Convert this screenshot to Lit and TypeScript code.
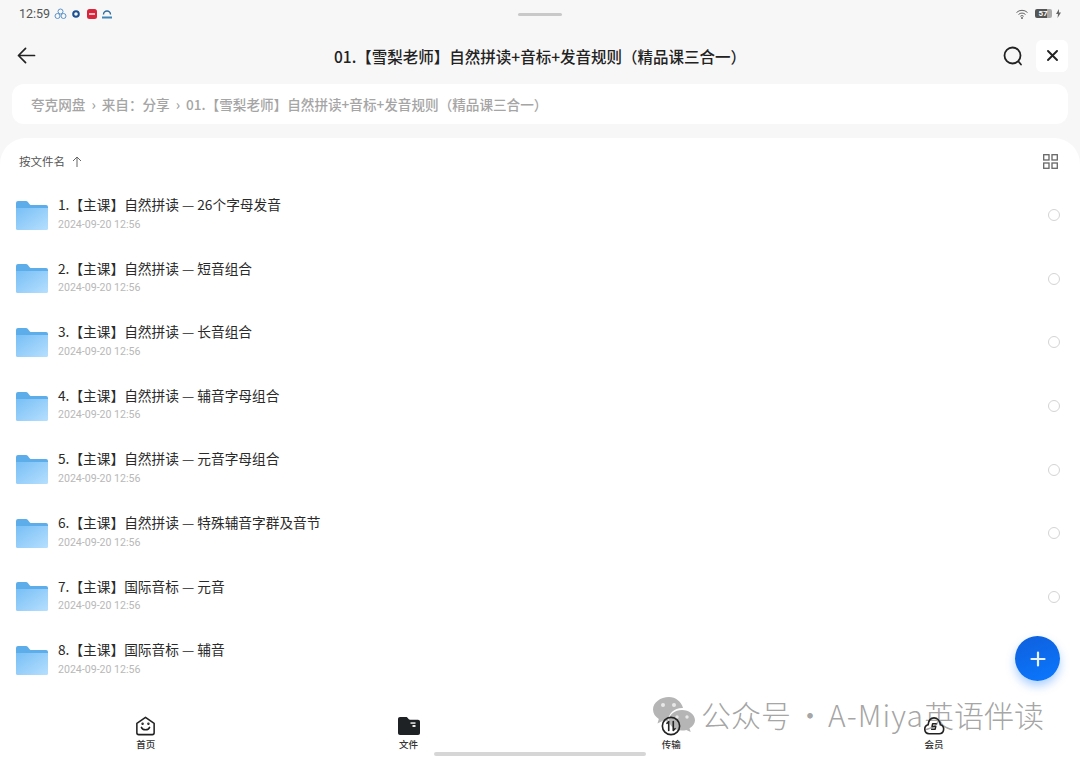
import { LitElement, html, css, svg } from "lit";
import { customElement } from "lit/decorators.js";

const rows = [
  "1.【主课】自然拼读 — 26个字母发音",
  "2.【主课】自然拼读 — 短音组合",
  "3.【主课】自然拼读 — 长音组合",
  "4.【主课】自然拼读 — 辅音字母组合",
  "5.【主课】自然拼读 — 元音字母组合",
  "6.【主课】自然拼读 — 特殊辅音字群及音节",
  "7.【主课】国际音标 — 元音",
  "8.【主课】国际音标 — 辅音",
];

const folder = svg`<svg class="folder" width="32" height="29" viewBox="0 0 32 29">
  <defs><linearGradient id="fg" x1="0" y1="0" x2="1" y2="1"><stop offset="0" stop-color="#78bff6"/><stop offset="1" stop-color="#b6dffe"/></linearGradient></defs>
  <path d="M0 2a2 2 0 0 1 2-2h8c1.500 0 2 1 3 2.500 .6 .9 1 1.500 2.500 1.500H30a2 2 0 0 1 2 2v4H0z" fill="#5cade9"/>
  <path d="M0 7h32V27.500a1.500 1.500 0 0 1-1.500 1.500H1.500A1.500 1.500 0 0 1 0 27.500z" fill="url(#fg)"/>
</svg>`;

@customElement("app-root")
export class AppRoot extends LitElement {
  static styles = css`
    :host { display: block; width: 1080px; height: 759px; position: relative; overflow: hidden; background: #f7f7f7;
      font-family: "Noto Sans CJK SC", "Noto Sans", sans-serif; color: #222; }
    .status { height: 27px; display: flex; align-items: center; padding: 0 19px; gap: 3.500px; font-size: 12.5px; color: #555; font-family: Roboto, sans-serif; }
    .status .spacer { flex: 1; }
    .status svg { display: block; }
    .batt { width: 17px; height: 9px; background: linear-gradient(90deg, #555 70%, #aaa 70%); border-radius: 2px; color: #fff; font-size: 8px; line-height: 9px; text-align: center; font-weight: 700; margin: 0 1px 0 3px; }
    .handle { position: absolute; left: 518px; top: 13px; width: 44px; height: 3px; border-radius: 2px; background: #c9c9c9; }
    .top { height: 57px; display: flex; align-items: center; padding: 0 12px 0 17px; }
    .top .title { flex: 1; text-align: center; font-size: 15.500px; font-weight: 500; color: #222; padding-left: 41px; white-space: nowrap; }
    .top .search { margin-right: 13px; display: block; }
    .close { width: 32px; height: 32px; background: #fff; border-radius: 6px; display: flex; align-items: center; justify-content: center; }
    .crumb { margin: 0 12px; height: 40px; border-radius: 12px; background: #fff; display: flex; align-items: center; padding: 0 19px; gap: 6px; font-size: 13.600px; font-weight: 500; color: #a5a5a5; white-space: nowrap; }
    .crumb .sep { font-size: 14px; color: #a0a0a0; }
    .sheet { margin-top: 14px; background: #fff; border-radius: 26px 26px 0 0; height: 621px; box-sizing: border-box; padding-top: 13px; display: flex; flex-direction: column; }
    .sort { height: 20px; display: flex; align-items: center; padding: 0 22px 0 19px; font-size: 11.5px; color: #555; gap: 7px; }
    .sort .spacer { flex: 1; }
    .list { padding-top: 12px; }
    .row { height: 63.6px; display: flex; align-items: center; padding: 0 20px 0 16px; box-sizing: border-box; gap: 10px; }
    .folder { flex: none; margin-top: 1px; }
    .text { flex: 1; padding-bottom: 4px; }
    .name { font-size: 13.700px; line-height: 19px; color: #2a2a2a; white-space: nowrap; }
    .date { font-size: 10.600px; line-height: 13px; margin-top: 3.500px; color: #b8b8b8; font-family: Roboto, sans-serif; }
    .radio { width: 10px; height: 10px; border: 1px solid #d4d4d4; border-radius: 50%; flex: none; margin-top: 1px; }
    .tabs { position: absolute; left: 0; right: 0; top: 716px; display: flex; padding: 0 14.500px; }
    .tab { flex: 1; display: flex; flex-direction: column; align-items: center; font-size: 9.500px; line-height: 12px; color: #333; font-weight: 500; gap: 2px; }
    .tab svg { display: block; }
    .indicator { position: absolute; left: 434px; top: 752px; width: 212px; height: 4px; border-radius: 2px; background: #d6d6d6; }
    .fab { position: absolute; left: 1015px; top: 636px; width: 45px; height: 45px; border-radius: 50%; background: linear-gradient(160deg, #0f5fdc, #0a78ff); box-shadow: 0 5px 10px rgba(20,120,255,.35); display: flex; align-items: center; justify-content: center; }
    .mark { position: absolute; left: 653px; top: 694px; display: flex; align-items: center; gap: 6px; font-size: 30px; line-height: 40px; color: rgba(120,120,120,.68); white-space: nowrap; font-family: "Noto Sans CJK SC", sans-serif; font-weight: 300; }
    .mark svg { display: block; }
    .mark .dot { margin: 0 3px 0 4px; }
    .mark .latin { letter-spacing: 1.1px; }
  `;

  render() {
    return html`
      <div class="status">
        <span class="time">12:59</span>
        <svg width="13" height="12" viewBox="0 0 13 12" fill="none" stroke="#5b93c9" stroke-width="1"><circle cx="6.500" cy="3.500" r="2.500"/><circle cx="3.500" cy="8" r="2.500"/><circle cx="9.500" cy="8" r="2.500"/></svg>
        <svg width="12" height="12" viewBox="0 0 12 12" fill="none" stroke="#1c4f94" stroke-width="2"><circle cx="6" cy="6" r="2.800"/></svg>
        <svg width="12" height="12" viewBox="0 0 12 12"><rect x="1" y="1" width="10" height="10" rx="2.500" fill="#d8253c"/><rect x="3" y="5" width="6" height="2" fill="#f6b9c0"/></svg>
        <svg width="12" height="12" viewBox="0 0 12 12" fill="none"><path d="M2.500 6.500a3.500 3.500 0 0 1 7 0" stroke="#2d6c9e" stroke-width="1.400"/><rect x="1" y="8.500" width="10" height="2" fill="#3f86b8"/></svg>
        <span class="spacer"></span>
        <svg width="12" height="10" viewBox="0 0 12 10" fill="none" stroke="#666" stroke-width="1"><path d="M.5 3.500a8 8 0 0 1 11 0M2.500 5.500a5 5 0 0 1 7 0M4.300 7.300a2.500 2.500 0 0 1 3.400 0"/><circle cx="6" cy="9" r=".6" fill="#666"/></svg>
        <span class="batt">57</span>
        <svg width="5" height="9" viewBox="0 0 5 9"><path d="M3 0 0 5h2L1.500 9 5 3.500H3z" fill="#666"/></svg>
      </div>
      <div class="handle"></div>
      <div class="top">
        <svg width="19" height="17" viewBox="0 0 20 18" fill="none" stroke="#222" stroke-width="1.800" stroke-linecap="round" stroke-linejoin="round"><path d="M1.500 9h17M9 1.500 1.500 9 9 16.500"/></svg>
        <div class="title">01.【雪梨老师】自然拼读+音标+发音规则（精品课三合一）</div>
        <svg class="search" width="20" height="20" viewBox="0 0 20 20" fill="none" stroke="#222" stroke-width="1.800" stroke-linecap="round"><circle cx="9.500" cy="9.500" r="8"/><path d="M15.500 15.500 18 18.500"/></svg>
        <div class="close"><svg width="11" height="11" viewBox="0 0 11 11" fill="none" stroke="#222" stroke-width="1.900" stroke-linecap="round"><path d="M1 1l9 9M10 1l-9 9"/></svg></div>
      </div>
      <div class="crumb">
        <span>夸克网盘</span><span class="sep">›</span><span>来自：分享</span><span class="sep">›</span>
        <span>01.【雪梨老师】自然拼读+音标+发音规则（精品课三合一）</span>
      </div>
      <div class="sheet">
        <div class="sort">
          <span>按文件名</span>
          <svg width="10" height="11" viewBox="0 0 10 11" fill="none" stroke="#666" stroke-width="1"><path d="M5 11V1M1 5l4-4 4 4"/></svg>
          <span class="spacer"></span>
          <svg width="15" height="15" viewBox="0 0 15 15" fill="none" stroke="#666" stroke-width="1.300"><rect x=".7" y=".7" width="5.300" height="5.300"/><rect x="9" y=".7" width="5.300" height="5.300"/><rect x=".7" y="9" width="5.300" height="5.300"/><rect x="9" y="9" width="5.300" height="5.300"/></svg>
        </div>
        <div class="list">
          ${rows.map(
            (r, i) => html`<div class="row">
              ${folder}
              <div class="text"><div class="name">${r}</div><div class="date">2024-09-20 12:56</div></div>
              ${i < 7 ? html`<div class="radio"></div>` : ""}
            </div>`
          )}
        </div>
      </div>
      <div class="mark">
        <svg width="42" height="36" viewBox="0 0 42 36"><path d="M16 1C7.500 1 0 6.500 0 13.500c0 4 2.300 7.200 5.800 9.500L4.500 27.500l5.300-2.800c1.800.5 3.600.8 5.500.8C14.800 17 22 11.500 30 12 28.500 5.800 22.500 1 16 1z" fill="#b5b5b5"/><path d="M29 14c-7 0-13 4.500-13 10.300S22 34.500 29 34.500c1.500 0 3-.2 4.300-.6l4.400 2.100-1.200-3.700C39.800 30.500 42 27.500 42 24.300 42 18.500 36 14 29 14z" fill="#b5b5b5"/><circle cx="10" cy="9" r="2" fill="#e8e8e8"/><circle cx="21" cy="9" r="2" fill="#e8e8e8"/><circle cx="24" cy="21" r="1.700" fill="#e8e8e8"/><circle cx="34" cy="21" r="1.700" fill="#e8e8e8"/></svg>
        <span>公众号<span class="dot">·</span><span class="latin">A-Miya</span>英语伴读</span>
      </div>
      <div class="tabs">
        <div class="tab">
          <svg width="21" height="20" viewBox="0 0 22 22" fill="none" stroke="#222" stroke-width="1.700" stroke-linejoin="round" stroke-linecap="round"><path d="M1.500 8 11 1.500 20.500 8v10.500a2 2 0 0 1-2 2h-15a2 2 0 0 1-2-2z"/><path d="M6.500 12.500c1.500 3.500 7.500 3.500 9 0"/><circle cx="7.800" cy="8.500" r=".5" fill="#222"/><circle cx="14.200" cy="8.500" r=".5" fill="#222"/></svg>
          <span>首页</span>
        </div>
        <div class="tab">
          <svg width="22" height="20" viewBox="0 0 22 22" preserveAspectRatio="none"><path d="M0 3a2 2 0 0 1 2-2h6c2 0 2 3 4 3h8a2 2 0 0 1 2 2v13a2 2 0 0 1-2 2H2a2 2 0 0 1-2-2z" fill="#1f2224"/><rect x="12.500" y="7" width="5" height="1.500" fill="#fff"/><rect x="14.500" y="10" width="3" height="2" fill="#fff"/></svg>
          <span>文件</span>
        </div>
        <div class="tab">
          <svg width="22" height="20" viewBox="0 0 22 22" fill="none" stroke="#222" stroke-width="1.800" stroke-linecap="round" stroke-linejoin="round"><circle cx="11" cy="11" r="9.500"/><path d="M8.500 16V6L6.500 8M13.500 6v10l2-2"/></svg>
          <span>传输</span>
        </div>
        <div class="tab">
          <svg width="24" height="20" viewBox="0 0 24 22" fill="none" stroke="#222" stroke-width="1.800" stroke-linejoin="round"><path d="M6.500 19.500h11a5 5 0 0 0 1.500-9.800C18.500 5 15.500 2 12 2S6 5 5.500 9.700a5 5 0 0 0 1 9.800z"/><path d="M15 8.500H10.500L9.800 11.500H14L13.300 14.500H8.800" stroke-width="1.600"/></svg>
          <span>会员</span>
        </div>
      </div>
      <div class="indicator"></div>
      <div class="fab"><svg width="16" height="16" viewBox="0 0 16 16" stroke="#e8f1ff" stroke-width="2.200" stroke-linecap="round"><path d="M8 1.500v13M1.500 8h13"/></svg></div>
    `;
  }
}
